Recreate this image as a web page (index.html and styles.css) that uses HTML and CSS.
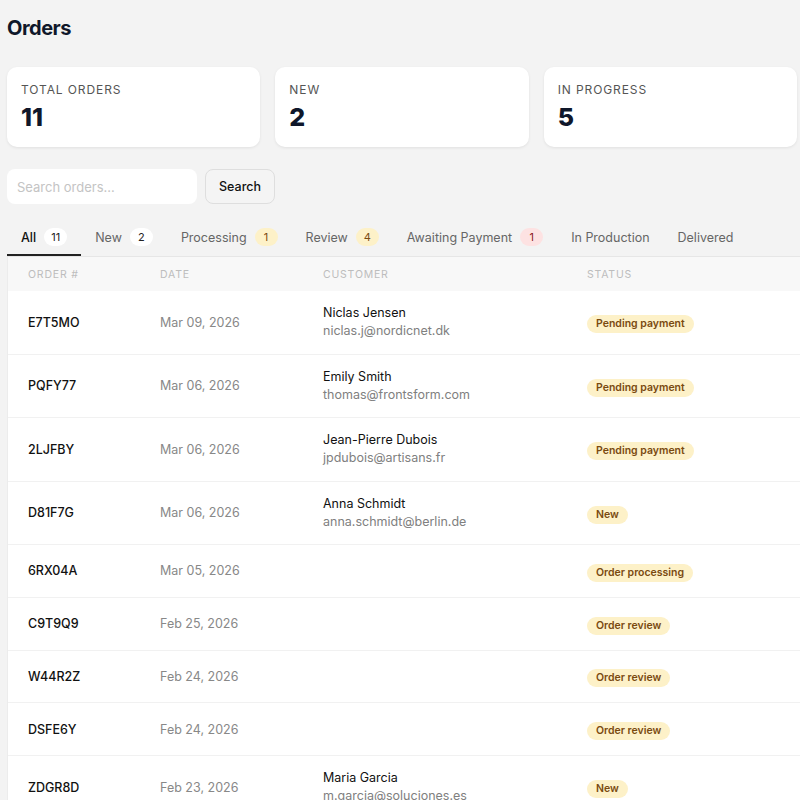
FILE: index.html
```html
<!DOCTYPE html>
<html lang="en">
<head>
    <meta charset="UTF-8">
    <meta name="viewport" content="width=device-width, initial-scale=1.0">
    <title>Orders</title>
    <link rel="stylesheet" href="styles.css">
</head>
<body>

    <h1>Orders</h1>

    <div class="stats">
        <div class="stat-card">
            <p class="stat-label">Total orders</p>
            <p class="stat-value">11</p>
        </div>
        <div class="stat-card">
            <p class="stat-label">New</p>
            <p class="stat-value">2</p>
        </div>
        <div class="stat-card">
            <p class="stat-label">In progress</p>
            <p class="stat-value">5</p>
        </div>
    </div>

    <div class="search-bar">
        <input type="text" class="search-input" placeholder="Search orders...">
        <button class="search-btn">Search</button>
    </div>

    <div class="tabs">
        <div class="tab active">All <span class="count">11</span></div>
        <div class="tab">New <span class="count">2</span></div>
        <div class="tab">Processing <span class="count yellow">1</span></div>
        <div class="tab">Review <span class="count yellow">4</span></div>
        <div class="tab">Awaiting Payment <span class="count red">1</span></div>
        <div class="tab">In Production</div>
        <div class="tab">Delivered</div>
    </div>

    <div class="table">
        <div class="row head">
            <div>Order #</div>
            <div>Date</div>
            <div>Customer</div>
            <div>Status</div>
        </div>
        <div class="row">
            <div class="code">E7T5MO</div>
            <div class="date">Mar 09, 2026</div>
            <div class="customer"><span class="name">Niclas Jensen</span><span class="email">niclas.j@nordicnet.dk</span></div>
            <div><span class="status">Pending payment</span></div>
        </div>
        <div class="row">
            <div class="code">PQFY77</div>
            <div class="date">Mar 06, 2026</div>
            <div class="customer"><span class="name">Emily Smith</span><span class="email">thomas@frontsform.com</span></div>
            <div><span class="status">Pending payment</span></div>
        </div>
        <div class="row">
            <div class="code">2LJFBY</div>
            <div class="date">Mar 06, 2026</div>
            <div class="customer"><span class="name">Jean-Pierre Dubois</span><span class="email">jpdubois@artisans.fr</span></div>
            <div><span class="status">Pending payment</span></div>
        </div>
        <div class="row">
            <div class="code">D81F7G</div>
            <div class="date">Mar 06, 2026</div>
            <div class="customer"><span class="name">Anna Schmidt</span><span class="email">anna.schmidt@berlin.de</span></div>
            <div><span class="status">New</span></div>
        </div>
        <div class="row">
            <div class="code">6RX04A</div>
            <div class="date">Mar 05, 2026</div>
            <div class="customer"></div>
            <div><span class="status">Order processing</span></div>
        </div>
        <div class="row">
            <div class="code">C9T9Q9</div>
            <div class="date">Feb 25, 2026</div>
            <div class="customer"></div>
            <div><span class="status">Order review</span></div>
        </div>
        <div class="row">
            <div class="code">W44R2Z</div>
            <div class="date">Feb 24, 2026</div>
            <div class="customer"></div>
            <div><span class="status">Order review</span></div>
        </div>
        <div class="row">
            <div class="code">DSFE6Y</div>
            <div class="date">Feb 24, 2026</div>
            <div class="customer"></div>
            <div><span class="status">Order review</span></div>
        </div>
        <div class="row">
            <div class="code">ZDGR8D</div>
            <div class="date">Feb 23, 2026</div>
            <div class="customer"><span class="name">Maria Garcia</span><span class="email">m.garcia@soluciones.es</span></div>
            <div><span class="status">New</span></div>
        </div>
    </div>

</body>
</html>
```

FILE: styles.css
```css
body {
    margin: 0;
    padding: 0 3px 0 7px;
    font-family: Inter, "Noto Sans", sans-serif;
    background-color: #f3f3f3;
    color: #111;
    overflow: hidden;
}

h1 {
    margin: 14px 0 0;
    font-size: 20px;
    line-height: 28px;
    font-weight: 700;
    color: #0f172a;
    letter-spacing: -0.5px;
}

.stats {
    display: grid;
    grid-template-columns: repeat(3, 1fr);
    gap: 15px;
    margin-top: 25px;
}

.stat-card {
    background: white;
    border-radius: 10px;
    height: 80px;
    box-sizing: border-box;
    padding: 15px 14px;
    box-shadow: 0px 1px 3px rgba(0, 0, 0, 0.08);
}

.stat-label {
    margin: 0;
    font-size: 12px;
    line-height: 16px;
    text-transform: uppercase;
    letter-spacing: 0.9px;
    color: #555;
}

.stat-value {
    margin: 4px 0 0;
    font-size: 25px;
    line-height: 30px;
    font-weight: 800;
    color: #0f172a;
}

.search-bar {
    display: flex;
    gap: 8px;
    margin-top: 22px;
}

.search-input {
    width: 190px;
    height: 35px;
    box-sizing: border-box;
    border: none;
    border-radius: 8px;
    padding: 0 10px;
    font-family: inherit;
    font-size: 13px;
    background: white;
}

.search-input::placeholder {
    color: #c4c4c4;
}

.search-btn {
    height: 35px;
    width: 70px;
    border: 1px solid #dedede;
    border-radius: 8px;
    background: #f4f4f4;
    font-family: inherit;
    font-size: 12.5px;
    font-weight: 500;
    color: #111;
}

.tabs {
    display: flex;
    margin-top: 14px;
    border-bottom: 1px solid #e6e6e6;
    margin-right: -20px;
}

.tab {
    display: flex;
    align-items: center;
    gap: 8px;
    height: 38px;
    padding: 0 14px;
    font-size: 12.5px;
    color: #666;
    white-space: nowrap;
}

.tab.active {
    color: #111;
    font-weight: 500;
    box-shadow: inset 0 -2px 0 #222;
}

.count {
    display: inline-block;
    min-width: 9px;
    padding: 2px 7px;
    border-radius: 10px;
    background: white;
    font-size: 11px;
    line-height: 14px;
    text-align: center;
    color: #222;
    font-weight: 400;
}

.count.yellow { background: #fdf1c8; color: #7a4a10; }
.count.red { background: #fde2e2; color: #8f1d1d; }

.table {
    background: white;
    margin-right: -20px;
    border-left: 1px solid #ececec;
}

.row {
    display: grid;
    grid-template-columns: 132px 163px 264px 1fr;
    align-items: center;
    padding: 13px 0 13px 20px;
    min-height: 52.75px;
    box-sizing: border-box;
    border-bottom: 1px solid #f1f1f1;
}

.row.head {
    min-height: 0;
    height: 34px;
    padding-top: 0;
    padding-bottom: 0;
    background: #f8f8f8;
    border-bottom: none;
    font-size: 10.5px;
    letter-spacing: 0.8px;
    text-transform: uppercase;
    color: #bdbdbd;
}

.code {
    font-size: 12.5px;
    font-weight: 500;
    color: #111;
}

.date {
    font-size: 12.5px;
    color: #888;
}

.customer {
    display: flex;
    flex-direction: column;
    font-size: 12.5px;
    line-height: 18.25px;
}

.name { color: #111; }
.email { color: #808080; }

.status {
    display: inline-block;
    padding: 2px 9px;
    border-radius: 10px;
    background: #fdf1c8;
    color: #7a4a10;
    font-size: 10.5px;
    line-height: 14px;
    font-weight: 600;
}
```
